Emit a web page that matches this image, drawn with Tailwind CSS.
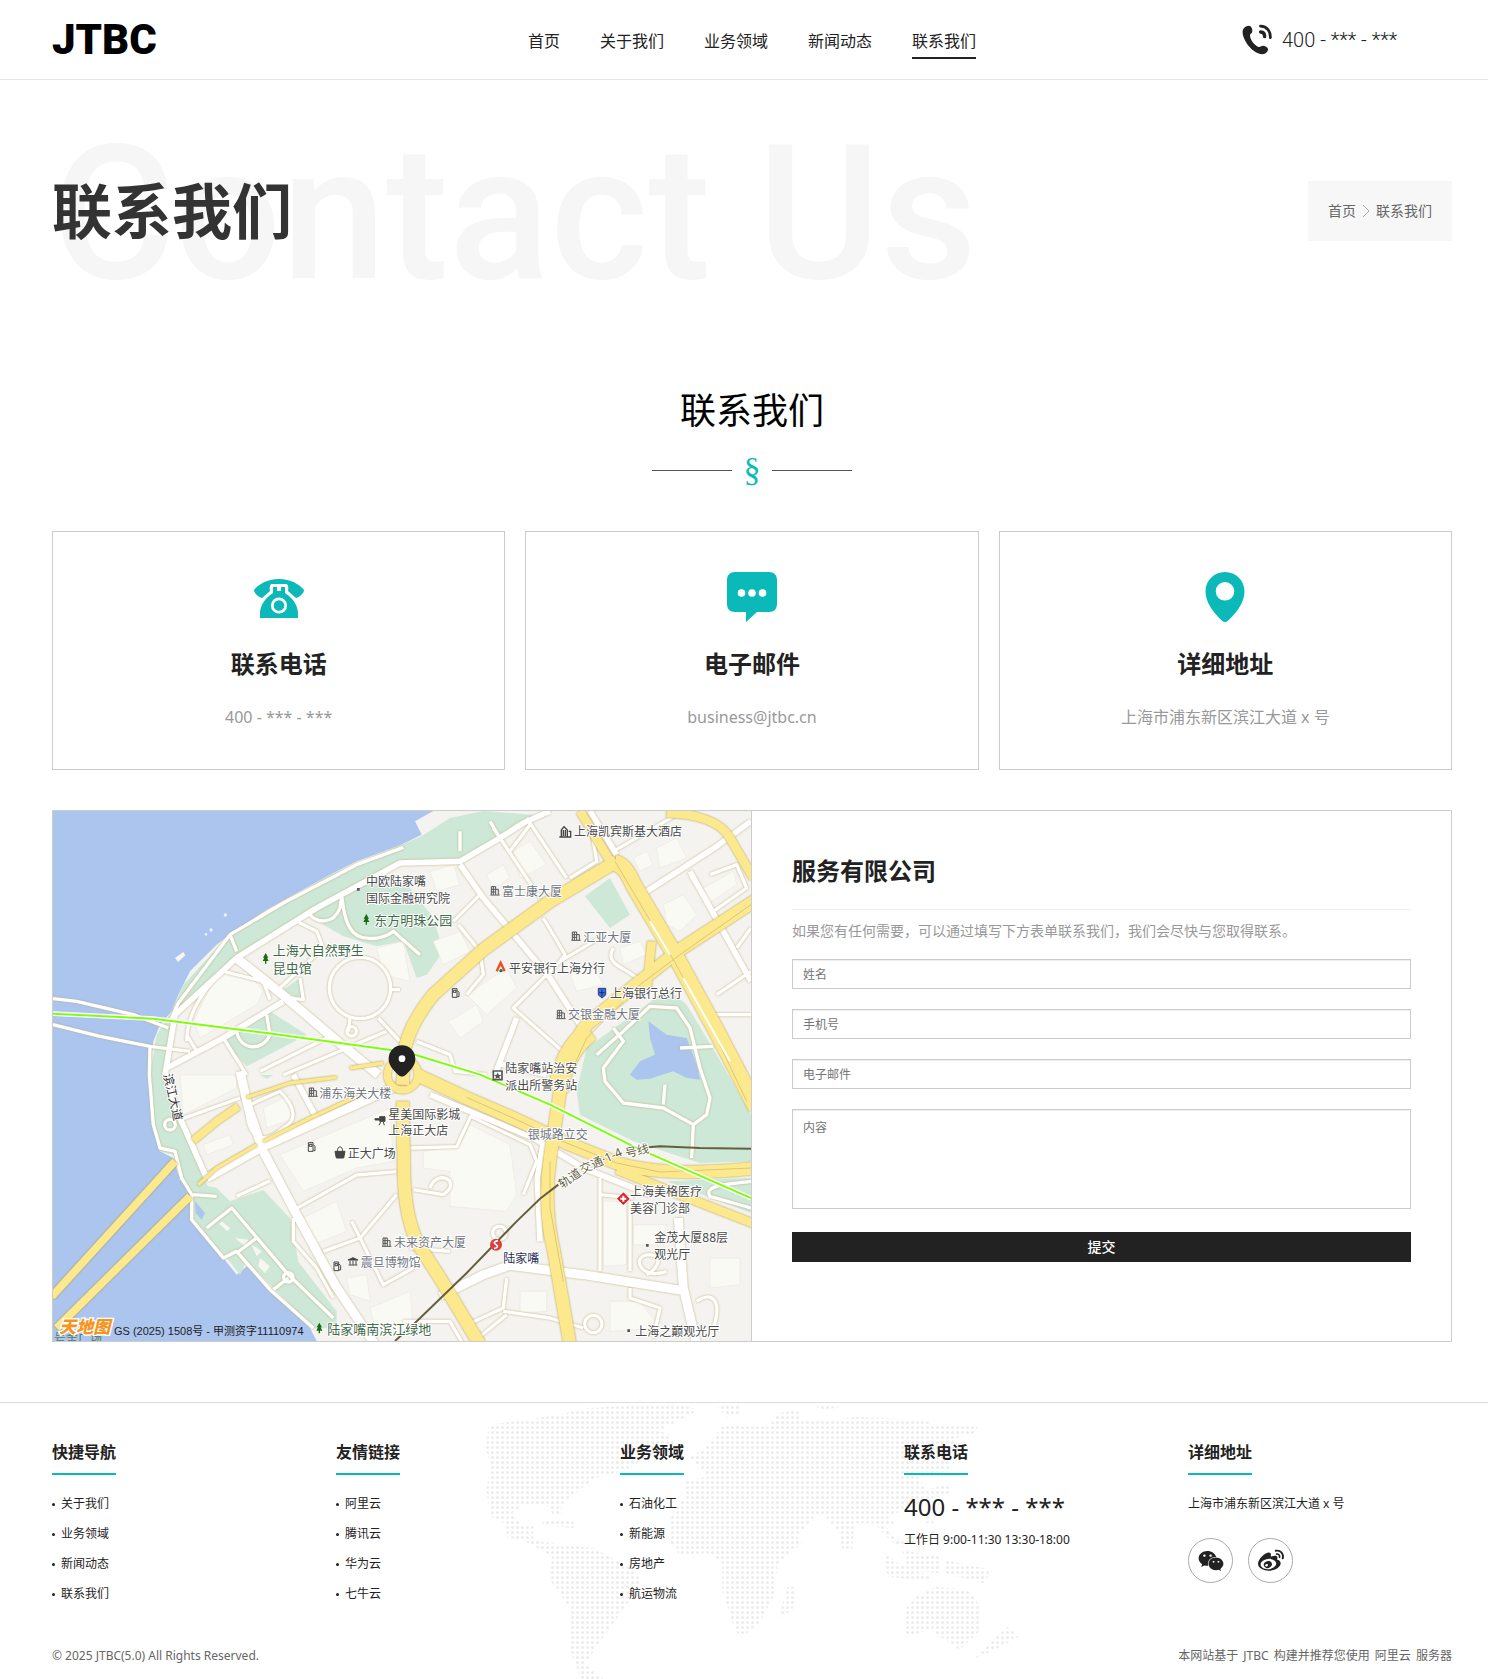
<!DOCTYPE html>
<html lang="zh-CN">
<head>
  <meta charset="utf-8">
  <meta name="viewport" content="width=device-width, initial-scale=1">
  <title>联系我们 - JTBC</title>
  <script src="https://cdn.jsdelivr.net/npm/@tailwindcss/browser@4"></script>
</head>
<body class="bg-white font-['Noto_Sans','Noto_Sans_CJK_SC',sans-serif] text-[#222]">

  <!-- header -->
  <header class="border-b border-[#e5e5e5] pl-[52px] pr-9">
    <div class="grid h-[79px] grid-cols-[34%_51%_15%] items-center">
      <a href="#" class="font-[Roboto,sans-serif] text-[42px] leading-none font-black text-black">JTBC</a>
      <nav class="flex gap-10 pt-2 text-base">
        <a href="#" class="border-b-2 border-transparent pb-1">首页</a>
        <a href="#" class="border-b-2 border-transparent pb-1">关于我们</a>
        <a href="#" class="border-b-2 border-transparent pb-1">业务领域</a>
        <a href="#" class="border-b-2 border-transparent pb-1">新闻动态</a>
        <a href="#" class="border-b-2 border-[#222] pb-1">联系我们</a>
      </nav>
      <div class="flex items-center gap-2">
        <svg class="size-8" viewBox="0 0 32 32" fill="#222">
          <path d="M2.600 3.600C4.400 1.800 7.300 1 8.800 2.500c1.500 2 2 4.200 1.200 6-.6 1.200-2 1.400-2 3 0 4 4.500 10 8.500 11.400 1.500.5 2.600-1.200 4.400-1.200 2 0 4.800 1.400 5.100 3.300.3 2.500-2.500 5.200-5.500 5.200C10.500 30.200.3 16 .6 7.600c.1-1.600.8-2.900 2-4z"/>
          <path d="M18.500 2.200c6.500.2 10.300 5 9.800 11.500" fill="none" stroke="#222" stroke-width="2.800" stroke-linecap="round"/>
          <path d="M18.600 8c2.600.2 4.100 2 4 4.600" fill="none" stroke="#222" stroke-width="3.400" stroke-linecap="round"/>
        </svg>
        <span class="font-[Roboto,sans-serif] text-xl leading-6 font-light">400 - *** - ***</span>
      </div>
    </div>
  </header>

  <!-- banner -->
  <section class="relative flex h-[262px] items-center justify-between pl-[52px] pr-9">
    <div class="absolute top-10 left-[52px] font-[Roboto,sans-serif] text-[188px] leading-[188px] font-medium whitespace-nowrap text-[#f6f6f6]" aria-hidden="true">Contact Us</div>
    <h1 class="relative text-[60px] leading-[80px] font-bold text-[#333]">联系我们</h1>
    <div class="flex h-[60px] items-center gap-1.5 bg-[#f7f7f7] px-5 text-sm text-[#666]">
      <a href="#">首页</a>
      <svg class="h-4 w-2" viewBox="0 0 8 16" fill="none" stroke="#aaa"><path d="M1 2l6 6-6 6"/></svg>
      <a href="#">联系我们</a>
    </div>
  </section>

  <main class="pt-[42px] pl-[52px] pr-9 pb-[60px]">
    <h2 class="text-center text-4xl leading-[54px] text-black">联系我们</h2>
    <div class="mt-4 flex items-center justify-center gap-2.5">
      <span class="h-px w-20 bg-[#555]"></span>
      <span class="w-5 text-center font-['Liberation_Serif',serif] text-[34px] leading-8 text-[#0bbab8]">§</span>
      <span class="h-px w-20 bg-[#555]"></span>
    </div>

    <!-- contact cards -->
    <div class="mt-[45px] grid grid-cols-3 gap-5">
      <div class="flex flex-col items-center border border-[#ccc] py-10">
        <svg class="size-[50px]" viewBox="0 0 50 50" fill="#0bbab8">
          <path d="M25 7C13 7 5 12 0 18c0 3 4 7 8 8l8-7c-.6-2.500-.5-5 1-7h16c1.500 2 1.600 4.500 1 7l8 7c4-1 8-5 8-8C45 12 37 7 25 7z"/>
          <path d="M19 15h4v4h4v-4h4v6l4 3c5 4 9 11 9 17v5H6v-5c0-6 4-13 9-17l4-3z"/>
          <circle cx="25" cy="33.500" r="6.700" fill="none" stroke="#fff" stroke-width="2.800"/>
        </svg>
        <h3 class="mt-6 text-2xl leading-9 font-bold">联系电话</h3>
        <p class="mt-[23px] text-base text-[#999]">400 - *** - ***</p>
      </div>
      <div class="flex flex-col items-center border border-[#ccc] py-10">
        <svg class="size-[50px]" viewBox="0 0 50 50" fill="#0bbab8">
          <path d="M8 0h34c5 0 8 3 8 8v24c0 5-3 8-8 8H30L19 50V40H8c-5 0-8-3-8-8V8c0-5 3-8 8-8z"/>
          <g fill="#fff"><circle cx="14.500" cy="21" r="3.800"/><circle cx="25" cy="21" r="3.800"/><circle cx="35.500" cy="21" r="3.800"/></g>
        </svg>
        <h3 class="mt-6 text-2xl leading-9 font-bold">电子邮件</h3>
        <p class="mt-[23px] text-base text-[#999]">business@jtbc.cn</p>
      </div>
      <div class="flex flex-col items-center border border-[#ccc] py-10">
        <svg class="size-[50px]" viewBox="0 0 50 50" fill="#0bbab8" fill-rule="evenodd">
          <path d="M25 0C14 0 5.500 8.500 5.500 19.500 5.500 31 14 41 22 48.800c2 1.600 4 1.600 6 0C36 41 44.500 31 44.500 19.500 44.500 8.500 36 0 25 0zm0 10a9.300 9.300 0 1 1 0 18.600A9.300 9.300 0 0 1 25 10z"/>
        </svg>
        <h3 class="mt-6 text-2xl leading-9 font-bold">详细地址</h3>
        <p class="mt-[23px] text-base text-[#999]">上海市浦东新区滨江大道 x 号</p>
      </div>
    </div>

    <!-- map + form -->
    <div class="mt-10 grid grid-cols-2 border border-[#ccc]">
      <div class="relative min-h-[530px] border-r border-[#ccc]">
        <svg class="absolute inset-0 size-full" viewBox="9 9 2094 1590" preserveAspectRatio="xMidYMid slice">
          <defs>
            <g id="road-l" stroke-width="27">
              <path d="M560 450L700 562 850 690 985 800M470 1110L640 1015 850 920 1040 835M570 790L595 900 640 1030 740 1220 855 1430 975 1610M1170 1465L1300 1400 1380 1372 1600 1400 1895 1447M1885 1230L1900 1440 1940 1610"/>
            </g>
            <g id="road-m" stroke-width="17">
              <path d="M345 801L375 620 560 450 800 300 1050 165 1230 160 1350 90 1420 45 1500 9M345 801L390 930 470 1110M1230 170L1300 270 1500 510 1590 650M1400 630L1335 800M1620 9L1700 140M1790 250L2000 115 2103 40M1920 190L2020 370 2103 520M1140 860L1450 990 1600 1080 1800 1160M1480 1000L1462 1110 1470 1300M730 800L805 940M350 780L520 690 700 580M1490 800L1340 765"/>
            </g>
            <g id="road-s" stroke-width="10">
              <path d="M9 572L80 580 250 620 355 660M9 650L150 685 300 715 420 730M360 640L385 585 540 380 700 285 920 170 1060 118M540 380L560 430M300 720L298 801 310 950 330 1020 375 1030 395 1110 425 1160 425 1235 520 1350 560 1330 660 1445 790 1560M500 1165L430 1160M470 1260L545 1200 715 1400 850 1530M715 1410L670 1445M620 1290L560 1335"/>
              <path d="M400 931L570 870M590 885C590 1000 640 1010 700 960 740 940 740 900 690 850L600 890M740 1201L920 1101 1040 1091M560 1165L660 1118M820 1330L930 1290 1040 1160M905 1240L1000 1430 1090 1380M730 1230L730 1300 800 1380 850 1470M520 690L590 801M700 801L1010 670M630 790L830 690M985 630L1050 700M900 630L895 670M1020 545L1050 545"/>
              <path d="M770 310C800 350 850 350 870 300L875 265C880 290 880 330 900 360 920 400 990 400 1030 370L1110 440M660 390L740 340 800 370 820 420 690 540M410 700C410 640 440 560 520 490L640 520 660 575M410 680L440 730M560 670C570 730 640 730 660 680L650 620M750 510L760 575 720 570"/>
              <path d="M1230 130L1230 70M1350 90L1320 40M1430 30L1550 210M1330 60L1470 270M1380 130L1440 50M1560 210L1640 160 1625 70M1690 130L1880 20M1480 330L1545 440 1530 460 1390 600 1550 740M1530 460L1640 395M1690 420C1660 470 1730 480 1760 510M1225 350L1290 430 1300 500 1250 560M1210 340L1290 260M1980 200L2060 170 2090 240 1990 310 1920 200M2103 360L2060 420M2000 560L2103 490M2103 620L1990 620M1100 700L1200 740 1215 790 1310 800"/>
              <path d="M1640 740L1720 670 1800 595 1880 600 1920 660 1950 780 1980 870 1970 920 1930 950 1840 900 1720 885 1665 820 1660 780 1720 700 1690 660M1930 950L1925 1050M1890 720L1990 715M1840 890L1845 830"/>
              <path d="M1080 1020L1220 1016 1262 925 1440 1010 1460 1060 1420 1160M1140 1140C1160 1080 1240 1120 1180 1160L1090 1145M1650 1110L1650 1390M1740 1180L1740 1390M1650 1160L1750 1170M1250 1550L1360 1500 1370 1410M1360 1510L1500 1530 1600 1560M1370 1520L1260 1610M1740 1440L1740 1470 1830 1500 1810 1590M1940 1480C1980 1450 2020 1470 1990 1560M1850 1390C1770 1420 1740 1340 1800 1340 1850 1350 1810 1390 1790 1400M1060 1540L1200 1540 1240 1610M1080 1320L1200 1330M2103 1120C2030 1130 1960 1130 1980 1165L2103 1200"/>
              <circle cx="930" cy="540" r="92"/><circle cx="905" cy="670" r="14"/><circle cx="1630" cy="1548" r="26"/><circle cx="715" cy="1408" r="14"/><circle cx="1348" cy="1275" r="20"/><circle cx="360" cy="950" r="16"/>
            </g>
            <g id="way-l">
              <path stroke-width="38" d="M1700 160L1500 280 1300 425 1150 560Q1070 660 1062 740L1058 830M1058 880L1062 1100Q1065 1230 1105 1310L1170 1410 1290 1610"/>
              <path stroke-width="48" d="M1695 165Q1725 170 1750 230L1880 450 2000 670 2120 900"/>
              <path stroke-width="38" d="M2120 275L1890 425 1720 560 1610 650Q1545 730 1530 850L1500 1050Q1480 1200 1510 1320L1560 1610M1100 800L1250 870 1400 935 1550 1005 1700 1065Q1850 1110 2120 1080"/>
              <path stroke-width="60" d="M1620 670Q1540 730 1525 850"/>
              <path stroke-width="26" d="M1700 1085L1900 1165 2120 1250M1850 15Q2000 20 2040 90L2110 210M1590 9L1680 160M1790 550L1805 400"/>
              <circle cx="1058" cy="800" r="46" stroke-width="22"/>
            </g>
            <g id="way-s" stroke-width="23">
              <path d="M5 1466L375 1060M430 998L500 940 565 895M20 1560L420 1165"/>
              <path stroke-width="10" d="M590 868L720 825 860 808M900 780L1000 765M445 1130L500 1080 620 1010M640 1000L760 940 930 860"/>
            </g>
            <path id="poi-building" d="M3 26V2h13v24M3 10h13M3 18h13M9 2v24M16 10h8v16M0 27h28" fill="none" stroke="#555" stroke-width="3"/>
            <path id="poi-tree" d="M10 0l8 14h-4l5 10h-7v8H8v-8H1l5-10H2z" fill="#1b6b10"/>
            <path id="poi-gas" d="M2 28V2h14v26zM5 7h8v6H5zM17 8l5 5v13h-5" fill="none" stroke="#444" stroke-width="3"/>
          </defs>

          <!-- water, land, parks -->
          <rect x="9" y="9" width="2094" height="1590" fill="#abc5ee"/>
          <path fill="#f4f3ef" d="M1150 9L1095 40 1115 80 1050 112 920 160 840 200 740 255 650 305 540 378 500 410 420 490 385 560 365 610 330 650 310 700 298 801 305 950 330 1030 370 1050 385 1100 425 1160 425 1235 460 1270 520 1350 560 1400 590 1375 660 1445 780 1560 800 1599H2103V9z"/>
          <g fill="#cde8d6">
            <path d="M1115 85L1050 112 840 200 540 378 400 530 365 610 320 680 300 800 302 940 330 1030 370 1040 400 1110 440 1160 480 1150 400 970 345 801 375 620 560 450 800 300 1050 165 1230 155 1350 90 1450 20 1300 9 1200 30z"/>
            <path d="M770 310L870 255 960 185 1080 240 1150 330 1180 430 1130 500 1100 510 1060 400 980 415 880 385 820 350z"/>
            <path d="M520 700L660 610 770 680 590 775zM700 545L750 510 755 580zM1605 265L1680 210 1740 320 1680 360z"/>
            <path d="M1610 720L1790 590 1850 540 1910 590 2000 740 2103 920V1060L1950 1065 1750 1000 1590 920 1580 850zM2103 1110L1850 1120 2103 1215zM630 801L670 801 650 812z"/>
            <path d="M385 1111L500 1140 540 1180 640 1146 720 1231 745 1361 860 1510 860 1560 790 1560 680 1450 590 1360 570 1400 530 1350 430 1240 430 1165z"/>
          </g>
          <path fill="#f4f3ef" d="M745 1361L800 1350 850 1400 870 1500z"/>
          <g fill="#abc5ee">
            <path d="M1795 640L1850 680 1910 690 1940 770 1950 815 1910 810 1870 790 1800 812 1760 815 1740 800 1770 760 1815 740 1800 690z"/>
            <path d="M435 1180L465 1215 455 1235 437 1215z"/>
          </g>

          <!-- building blocks -->
          <g fill="#fafaf5" stroke="#ece9df" stroke-width="2">
            <path d="M500 500L590 490 640 550 620 590 450 690 430 640z"/>
            <path d="M390 801L560 801 560 840 400 920zM980 420L1060 400 1080 520 1000 500zM1390 130L1440 100 1490 170 1410 210zM1750 150L1790 130 1810 170 1770 190zM1820 120L1880 90 1910 150 1830 180zM1840 290L1900 260 1940 320 1890 370 1850 350z"/>
            <path d="M1250 560L1370 480 1400 540 1310 620zM1195 640L1280 590 1300 640 1230 690zM1710 420L1770 400 1790 440 1720 470zM1560 500L1630 470 1660 530 1580 550zM1960 240L2050 190 2060 230 1970 290z"/>
            <path d="M690 1040L1020 900 1030 1060 920 1080 760 1150zM640 900L720 860 740 930 650 960zM760 1230L860 1180 890 1270 790 1310zM460 1010L540 980 550 1010 470 1040z"/>
            <path d="M1120 1030L1230 1010 1260 950 1380 1010 1400 1160 1370 1210 1200 1195 1200 1090 1120 1080zM1660 1180H1730V1370L1660 1375zM1750 1250H1850L1830 1310H1750zM1980 1350H2070V1430L1980 1440zM1410 1450H1490V1510L1410 1515zM1680 1480L1770 1480 1830 1560 1680 1570z"/>
            <path d="M890 1410L950 1400 960 1480 900 1460zM960 1500L1080 1450 1090 1560 980 1580zM1140 190L1210 170 1230 230 1160 250zM1310 200L1360 170 1380 210 1330 240zM1150 400L1230 370 1260 430 1180 470z"/>
          </g>
          <path d="M375 450l25-18 6 10-22 20zM515 1240l25 20-8 10-24-22zM555 1290l40 5-10 20zM630 1350l30 25-15 20-20-20zM605 1310l30 20-15 15zM680 295l14-12 8 10z" fill="#f7f6f0"/>
          <g fill="#eef1f0"><circle cx="526" cy="321" r="5"/><circle cx="483" cy="366" r="5"/><circle cx="468" cy="379" r="4"/></g>

          <!-- streets -->
          <g fill="none" stroke="#fff" stroke-linejoin="round" style="filter:drop-shadow(0 0 3px #bfae7c)">
            <use href="#road-s"/>
            <use href="#road-m"/>
            <use href="#road-l"/>
          </g>
          <g fill="none" stroke="#fde98d" stroke-linejoin="round" style="filter:drop-shadow(0 0 3px #b39436)">
            <use href="#way-s"/>
            <use href="#way-l"/>
          </g>
          <g fill="none" stroke="#dcc774" stroke-width="3">
            <path d="M1695 160L1870 455 2000 690 2090 880M1730 560L1890 440 2103 290M1560 800L1610 690 1720 580M1500 1060L1500 1200 1540 1420M1250 868L1400 935 1550 1005 1700 1065 1830 1092 2103 1080"/>
          </g>
          <path d="M1800 340L1860 440M1900 510L2040 760" stroke="#fff" stroke-width="6"/>

          <!-- tunnel and metro lines -->
          <g fill="none">
            <path d="M9 617L310 632 650 675 1050 730 1100 742 1290 800 1500 890 1750 1015 2103 1170" stroke="#fff" stroke-width="14"/>
            <path d="M9 617L310 632 650 675 1050 730 1100 742 1290 800 1500 890 1750 1015 2103 1170" stroke="#7dff0a" stroke-width="6"/>
            <path d="M1035 1599L1095 1545 1250 1395 1400 1240 1470 1172 1525 1130M1795 1018L1830 1015 1950 1020 2103 1022" stroke="#665f3e" stroke-width="6"/>
          </g>
          <circle cx="1338" cy="1310" r="18" fill="#d8403c"/>
          <path d="M1344 1298c-16 4-12 8-6 12s8 8-6 12" fill="none" stroke="#fff" stroke-width="5"/>

          <!-- place icons -->
          <use href="#poi-building" x="1321" y="234"/>
          <use href="#poi-building" x="1564" y="370"/>
          <use href="#poi-building" x="1519" y="605"/>
          <use href="#poi-building" x="775" y="838"/>
          <use href="#poi-building" x="996" y="1288"/>
          <use href="#poi-tree" x="939" y="318"/>
          <use href="#poi-tree" x="637" y="435"/>
          <use href="#poi-tree" x="798" y="1544"/>
          <use href="#poi-gas" x="1205" y="540"/>
          <use href="#poi-gas" x="773" y="1002"/>
          <use href="#poi-gas" x="850" y="1360"/>
          <path d="M1534 87V66l8-10 10 10v21zM1556 70h6v17h-34M1540 66v18M1546 66v18" fill="none" stroke="#444" stroke-width="4"/>
          <path d="M1340 490l12-26 12 26" fill="none" stroke="#f04a1c" stroke-width="7"/><circle cx="1353" cy="488" r="5" fill="#0c7a50"/>
          <path d="M1645 541h22v20l-11 9-11-9z" fill="#3b6fe0" stroke="#223c80" stroke-width="3"/><path d="M1656 545v20M1648 554h16" stroke="#1a2f66" stroke-width="3"/>
          <path d="M1330 789h26v26h-26z" fill="#fff" stroke="#555" stroke-width="5"/><path d="M1343 793l3 7 8 1-6 5 2 7-7-4-7 4 2-7-6-5 8-1z" fill="#555"/>
          <path d="M975 932h14v-6h16v14h-16v-4h-14zM992 942l-5 10M1000 942l3 10" fill="#444" stroke="#444" stroke-width="3"/>
          <path d="M855 1030h30l-4 20h-22z" fill="#444" stroke="#444" stroke-width="3"/><path d="M862 1030c0-18 16-18 16 0" fill="none" stroke="#444" stroke-width="3"/>
          <path d="M894 1356l15-7 15 7zM896 1371h26M900 1358v12M909 1358v12M918 1358v12" fill="#444" stroke="#444" stroke-width="3"/>
          <path d="M1720 1156l16 16-16 16-16-16z" fill="#fff" stroke="#d8202c" stroke-width="4"/>
          <path d="M1720 1156l16 16-16 16-16-16z" fill="#d8202c"/><path d="M1720 1163v18M1711 1172h18" stroke="#fff" stroke-width="6"/>
          <path d="M921 240h8v8h-8zM1788 1308h8v8h-8zM1732 1564h8v8h-8z" fill="#555"/>

          <!-- place labels -->
          <g class="font-['Noto_Sans','Noto_Sans_CJK_SC',sans-serif] text-[36px]" fill="#4a4a4a" stroke="#fff" stroke-width="6" stroke-linejoin="round" paint-order="stroke">
            <text x="1572" y="84">上海凯宾斯基大酒店</text>
            <text x="948" y="234">中欧陆家嘴</text>
            <text x="948" y="285">国际金融研究院</text>
            <text x="1377" y="495">平安银行上海分行</text>
            <text x="1680" y="571">上海银行总行</text>
            <text x="1366" y="794">陆家嘴站治安</text>
            <text x="1366" y="845">派出所警务站</text>
            <text x="1015" y="932">星美国际影城</text>
            <text x="1015" y="982">上海正大店</text>
            <text x="893" y="1050">正大广场</text>
            <text x="1740" y="1164">上海美格医疗</text>
            <text x="1740" y="1215">美容门诊部</text>
            <text x="1813" y="1303">金茂大厦88层</text>
            <text x="1813" y="1354">观光厅</text>
            <text x="1756" y="1583">上海之巅观光厅</text>
            <text x="1360" y="1365" fill="#2a2f55">陆家嘴</text>
            <g fill="#6f7680">
              <text x="1356" y="263">富士康大厦</text>
              <text x="1600" y="402">汇亚大厦</text>
              <text x="1554" y="634">交银金融大厦</text>
              <text x="808" y="870">浦东海关大楼</text>
              <text x="1433" y="994">银城路立交</text>
              <text x="1032" y="1318">未来资产大厦</text>
              <text x="932" y="1376">震旦博物馆</text>
            </g>
            <g class="text-[39px]" fill="#3f6b4a">
              <text x="973" y="351">东方明珠公园</text>
              <text x="668" y="440">上海大自然野生</text>
              <text x="668" y="494">昆虫馆</text>
              <text x="832" y="1579">陆家嘴南滨江绿地</text>
            </g>
            <text transform="translate(1537 1142) rotate(-35)" fill="#665f3e">轨道</text>
            <text transform="translate(1597 1098) rotate(-25)" fill="#665f3e">交通·1-4</text>
            <text transform="translate(1729 1049) rotate(-13)" fill="#665f3e">号线</text>
            <text transform="translate(340 800) rotate(77)" fill="#333">滨江大道</text>
            <text x="12" y="1604" fill="#5b7a5b" stroke="none">号舍广场</text>
          </g>

          <!-- map credit -->
          <text x="28" y="1576" class="font-['Noto_Sans_CJK_SC',sans-serif] text-[51px] font-black italic" fill="#f7941d" stroke="#fff" stroke-width="8" paint-order="stroke">天地图</text>
          <text x="192" y="1580" class="font-['Liberation_Sans','Noto_Sans_CJK_SC',sans-serif] text-[33px]" fill="#222">GS (2025) 1508号 - 甲测资字11110974</text>

          <!-- marker -->
          <path d="M1056 712c-23 0-40 18-40 41 0 20 15 34 28 47 8 7 16 7 24 0 13-13 28-27 28-47 0-23-17-41-40-41z" fill="#222"/>
          <circle cx="1056" cy="752" r="10" fill="#fff"/>
        </svg>
      </div>

      <form class="px-10 pt-10 pb-[78px]">
        <h3 class="text-2xl leading-10 font-bold">服务有限公司</h3>
        <p class="mt-[18px] border-t border-[#eee] pt-2.5 text-sm leading-[22px] text-[#999]">如果您有任何需要，可以通过填写下方表单联系我们，我们会尽快与您取得联系。</p>
        <input type="text" name="name" aria-label="姓名" placeholder="姓名" class="mt-[17px] block h-[30px] w-full border border-[#ccc] px-2.5 text-xs shadow-[inset_0_1px_1px_#eee] placeholder:text-[#757575]">
        <input type="text" name="mobile" aria-label="手机号" placeholder="手机号" class="mt-5 block h-[30px] w-full border border-[#ccc] px-2.5 text-xs shadow-[inset_0_1px_1px_#eee] placeholder:text-[#757575]">
        <input type="text" name="email" aria-label="电子邮件" placeholder="电子邮件" class="mt-5 block h-[30px] w-full border border-[#ccc] px-2.5 text-xs shadow-[inset_0_1px_1px_#eee] placeholder:text-[#757575]">
        <textarea name="content" aria-label="内容" placeholder="内容" class="mt-5 block h-[100px] w-full resize-none border border-[#ccc] p-2.5 text-xs shadow-[inset_0_1px_1px_#eee] placeholder:text-[#757575]"></textarea>
        <button type="button" class="mt-[23px] block h-[30px] w-full bg-[#222] text-sm font-medium text-white">提交</button>
      </form>
    </div>
  </main>

  <!-- footer -->
  <footer class="relative overflow-hidden border-t border-[#ddd] pt-9 pl-[52px] pr-9 pb-2">
    <svg class="absolute top-0 left-[485px] h-[276px] w-[534px]" viewBox="485 13 534 276" aria-hidden="true">
      <defs>
        <pattern id="dots" width="5" height="5" patternUnits="userSpaceOnUse"><circle cx="2.500" cy="2.500" r="1.500" fill="#ececec"/></pattern>
        <clipPath id="world">
          <path transform="scale(.472 .3333)" d="M1035 105L1180 75 1240 55 1430 40 1480 60 1440 90 1400 120 1430 160 1370 200 1330 240 1260 265 1220 310 1190 345 1190 375 1170 375 1165 350 1110 345 1085 370 1110 410 1130 400 1130 450 1170 460 1260 475 1330 530 1360 570 1330 640 1300 700 1270 760 1240 820 1280 870 1230 866 1210 790 1205 650 1165 570 1170 500 1120 460 1075 440 1070 400 1040 380 1030 300 1040 230 1030 180zM1150 390L1220 395 1215 415 1150 405z"/>
          <path transform="scale(.472 .3333)" d="M1520 50L1568 40V75L1540 80zM1490 180L1530 110 1568 100V750L1550 690 1530 600 1530 520 1500 490 1440 495 1415 450 1420 380 1450 320 1450 270 1500 260 1480 230 1460 200z"/>
          <path transform="translate(740 0) scale(.477 .3333)" d="M0 110L60 110 80 70 120 60 130 90 200 90 240 80 390 90 400 105 500 110 490 130 440 150 480 170 440 190 440 240 400 260 370 250 390 300 440 280 440 310 390 330 360 350 310 380 330 410 300 400 330 450 400 430 410 400 390 400 390 380 410 390 405 430 350 470 330 470 280 400 240 400 235 480 215 480 205 420 170 370 150 390 120 440 130 460 80 520 70 620 40 700 0 745zM150 45L210 50 180 60zM100 590L118 590 110 660 80 685zM300 480L330 520 400 560 400 575 310 560zM340 480L420 500 420 550 350 540zM430 510L530 540 510 580 430 550zM370 620L410 590 480 600 505 650 505 720 460 780 400 720 345 740 345 660zM560 710L585 740 540 775 490 808z"/>
        </clipPath>
      </defs>
      <rect x="485" y="10" width="534" height="280" fill="url(#dots)" clip-path="url(#world)"/>
    </svg>

    <div class="relative grid min-h-[190px] grid-cols-5 gap-5 text-xs">
      <div>
        <h4 class="inline-block border-b-2 border-[#0bbab8] pb-[7px] text-base leading-[27px] font-bold">快捷导航</h4>
        <ul class="mt-3.5 leading-[30px]">
          <li class="flex items-center gap-1.5"><span class="size-[3px] rounded-full bg-[#222]"></span><a href="#">关于我们</a></li>
          <li class="flex items-center gap-1.5"><span class="size-[3px] rounded-full bg-[#222]"></span><a href="#">业务领域</a></li>
          <li class="flex items-center gap-1.5"><span class="size-[3px] rounded-full bg-[#222]"></span><a href="#">新闻动态</a></li>
          <li class="flex items-center gap-1.5"><span class="size-[3px] rounded-full bg-[#222]"></span><a href="#">联系我们</a></li>
        </ul>
      </div>
      <div>
        <h4 class="inline-block border-b-2 border-[#0bbab8] pb-[7px] text-base leading-[27px] font-bold">友情链接</h4>
        <ul class="mt-3.5 leading-[30px]">
          <li class="flex items-center gap-1.5"><span class="size-[3px] rounded-full bg-[#222]"></span><a href="#">阿里云</a></li>
          <li class="flex items-center gap-1.5"><span class="size-[3px] rounded-full bg-[#222]"></span><a href="#">腾讯云</a></li>
          <li class="flex items-center gap-1.5"><span class="size-[3px] rounded-full bg-[#222]"></span><a href="#">华为云</a></li>
          <li class="flex items-center gap-1.5"><span class="size-[3px] rounded-full bg-[#222]"></span><a href="#">七牛云</a></li>
        </ul>
      </div>
      <div>
        <h4 class="inline-block border-b-2 border-[#0bbab8] pb-[7px] text-base leading-[27px] font-bold">业务领域</h4>
        <ul class="mt-3.5 leading-[30px]">
          <li class="flex items-center gap-1.5"><span class="size-[3px] rounded-full bg-[#222]"></span><a href="#">石油化工</a></li>
          <li class="flex items-center gap-1.5"><span class="size-[3px] rounded-full bg-[#222]"></span><a href="#">新能源</a></li>
          <li class="flex items-center gap-1.5"><span class="size-[3px] rounded-full bg-[#222]"></span><a href="#">房地产</a></li>
          <li class="flex items-center gap-1.5"><span class="size-[3px] rounded-full bg-[#222]"></span><a href="#">航运物流</a></li>
        </ul>
      </div>
      <div>
        <h4 class="inline-block border-b-2 border-[#0bbab8] pb-[7px] text-base leading-[27px] font-bold">联系电话</h4>
        <p class="mt-3.5 text-2xl leading-9">400 - *** - ***</p>
        <p class="leading-[30px]">工作日 9:00-11:30 13:30-18:00</p>
      </div>
      <div>
        <h4 class="inline-block border-b-2 border-[#0bbab8] pb-[7px] text-base leading-[27px] font-bold">详细地址</h4>
        <p class="mt-3.5 leading-[30px]">上海市浦东新区滨江大道 x 号</p>
        <div class="mt-[19px] flex gap-[15px]">
          <a href="#" aria-label="微信" class="flex size-[45px] items-center justify-center rounded-full border border-[#aaa]">
            <svg class="size-[26px]" viewBox="0 0 576 512" fill="#222"><path d="M385.200 167.600c6.400 0 12.600.3 18.800 1.100C387.400 90.300 303.300 32 207.700 32 100.500 32 13 104.800 13 197.400c0 53.400 29.300 97.500 77.900 131.600l-19.300 58.600 68-34.100c24.400 4.800 43.800 9.700 68.200 9.700 6.200 0 12.100-.3 18.300-.8-4-12.900-6.200-26.600-6.200-40.800-.1-84.900 72.900-154 165.300-154zm-104.500-52.900c14.500 0 24.200 9.700 24.200 24.400 0 14.500-9.700 24.200-24.200 24.200-14.800 0-29.300-9.700-29.300-24.200.1-14.700 14.600-24.400 29.300-24.400zm-136.400 48.600c-14.500 0-29.300-9.700-29.300-24.200 0-14.800 14.800-24.400 29.300-24.400 14.800 0 24.400 9.700 24.400 24.400 0 14.600-9.600 24.200-24.400 24.200zM563 319.400c0-77.900-77.900-141.300-165.400-141.300-92.700 0-165.400 63.400-165.400 141.300S305 460.700 397.600 460.700c19.300 0 38.900-5.100 58.600-9.900l53.400 29.300-14.800-48.600C534 402.100 563 363.200 563 319.400zm-219.100-24.500c-9.700 0-19.300-9.700-19.300-19.600 0-9.700 9.700-19.300 19.300-19.300 14.800 0 24.400 9.700 24.400 19.300 0 10-9.700 19.600-24.400 19.600zm107.100 0c-9.700 0-19.300-9.700-19.300-19.600 0-9.700 9.700-19.300 19.300-19.300 14.500 0 24.400 9.700 24.400 19.300.1 10-9.900 19.600-24.400 19.600z"/></svg>
          </a>
          <a href="#" aria-label="微博" class="flex size-[45px] items-center justify-center rounded-full border border-[#aaa]">
            <svg class="size-[26px]" viewBox="0 0 512 512" fill="#222"><path d="M407 177.600c7.600-24-13.400-46.800-37.400-41.700-22 4.800-28.800-28.100-7.100-32.800 50.100-10.900 92.300 37.100 76.500 84.800-6.800 21.200-38.800 10.800-32-10.300zM214.800 446.700C108.500 446.700 0 395.300 0 310.400c0-44.300 28-95.400 76.300-143.700C176 67 279.500 65.800 249.900 161c-4 13.100 12.300 5.700 12.300 6 79.500-33.600 140.500-16.800 114 51.400-3.700 9.400 1.100 10.900 8.300 13.100 135.700 42.300 34.800 215.200-169.700 215.200zm143.700-146.300c-5.400-55.700-78.500-94-163.400-85.700-84.800 8.600-148.800 60.300-143.400 116s78.500 94 163.400 85.700c84.800-8.600 148.800-60.300 143.400-116zM347.900 35.100c-25.900 5.600-16.800 43.700 8.300 38.300 72.300-15.200 134.800 52.800 111.700 124-7.400 24.200 29.100 37 37.400 12 31.900-99.800-55.100-195.900-157.400-174.300zm-78.500 311c-17.100 38.800-66.800 60-109.100 46.300-40.800-13.100-58-53.400-40.300-89.700 17.700-35.400 63.100-55.400 103.400-45.100 42 10.800 63.100 50.200 46 88.500zm-86.300-30c-12.900-5.400-30 .3-38 12.900-8.300 12.900-4.300 28 8.600 34 13.100 6 30.800.3 39.100-12.900 8-13.100 3.700-28.300-9.700-34z"/></svg>
          </a>
        </div>
      </div>
    </div>

    <div class="relative mt-3 flex justify-between text-xs leading-[30px] text-[#666]">
      <p>© 2025 JTBC(5.0) All Rights Reserved.</p>
      <p>本网站基于 <a href="#" class="mx-0.5">JTBC</a> 构建并推荐您使用 <a href="#" class="mx-0.5">阿里云</a> 服务器</p>
    </div>
  </footer>

</body>
</html>
